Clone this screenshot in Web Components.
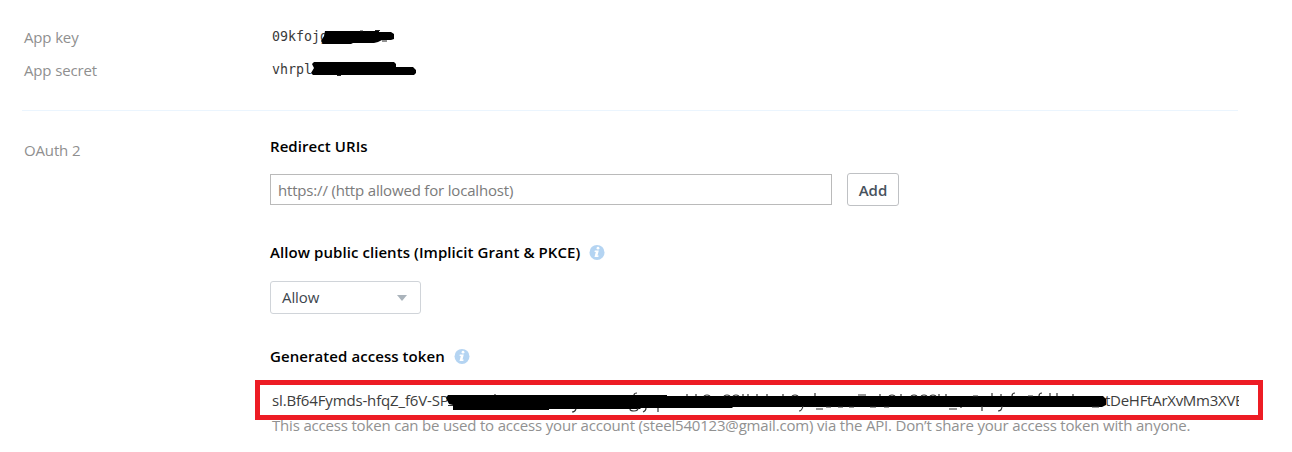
<!DOCTYPE html>
<html lang="en">
<head>
<meta charset="utf-8">
<title>App settings</title>
<style>
body{margin:0;background:#fff;width:1292px;height:452px;overflow:hidden;font:15px/20px "Open Sans","Noto Sans",sans-serif;color:#000}
</style>
</head>
<body>
<app-settings></app-settings>
<script>
function define(name, html){
  const t=document.createElement('template');
  t.innerHTML=html;
  customElements.define(name,class extends HTMLElement{
    constructor(){super();this.attachShadow({mode:'open'}).appendChild(t.content.cloneNode(true));}
  });
}

define('setting-row',`<style>
:host{display:grid;grid-template-columns:246px 1fr}
.label{color:#8f8f8f;letter-spacing:-.15px}
.value{min-width:0}
</style><div class="label"><slot name="label"></slot></div><div class="value"><slot></slot></div>`);

define('key-value',`<style>
:host{display:block;position:relative;height:20px;padding-left:2px;font:13.3px/20px "DejaVu Sans Mono",monospace;color:#3a3a3a}
::slotted(svg){position:absolute;left:0;top:0;overflow:visible}
</style><slot></slot>`);

define('info-icon',`<style>:host{display:block;width:16px;height:16px}svg{display:block}</style>
<svg width="16" height="16" viewBox="0 0 16 16"><circle cx="8" cy="8.4" r="7.5" fill="#b4d4f2"/>
<circle cx="9" cy="4.2" r="1.4" fill="#fff"/><path d="M5.8 6.5h4L8.5 11.5h1.2l-.4 1.5H5.5L6.8 7.9H5.5z" fill="#fff"/></svg>`);

define('section-title',`<style>
:host{display:flex;align-items:center;gap:9px;height:20px;font-weight:600}
.t{letter-spacing:.07px}
</style><span class="t"><slot></slot></span><slot name="icon"></slot>`);

define('uri-field',`<style>
:host{display:flex;align-items:center;gap:15px;height:33px}
.input{box-sizing:border-box;width:562px;height:31px;border:1px solid #bababa;padding:0 7px;line-height:31px;color:#7b7b7b;letter-spacing:-.18px}
.button{box-sizing:border-box;width:52px;height:33px;border:1px solid #bfc1c4;border-radius:3px;text-align:center;line-height:33px;font-weight:600;color:#47525d}
</style><div class="input"><slot></slot></div><div class="button"><slot name="action"></slot></div>`);

define('select-box',`<style>
:host{box-sizing:border-box;display:flex;justify-content:space-between;align-items:center;width:151px;height:33px;border:1px solid #d0d4d9;border-radius:3px;padding:0 13px 0 11px;color:#3d464d}
span{letter-spacing:-.1px;padding-bottom:2px}
</style><span><slot></slot></span><svg width="10" height="6"><path d="M0 0h10L5 6z" fill="#aab3bb"/></svg>`);

define('access-token',`<style>
:host{display:block;position:relative;width:969px;height:40px}
.line{display:flex;overflow:hidden;height:40px;line-height:41px;padding-left:2px;color:#3d3d3d;white-space:nowrap}
.head{width:833px;flex:none;letter-spacing:-.15px}
.tail{letter-spacing:-.27px}
.frame{position:absolute;box-sizing:border-box;left:-15px;top:0;width:1008px;height:40px;border:5px solid #ed1c24}
::slotted(svg){position:absolute;left:0;top:0;overflow:visible}
</style><div class="line"><span class="head"><slot name="head"></slot></span><span class="tail"><slot name="tail"></slot></span></div>
<slot name="cover"></slot><div class="frame"></div>`);

define('app-settings',`<style>
:host{display:block;box-sizing:border-box;padding:27px 0 0 24px;width:1292px;height:452px}
.keys{display:grid;gap:13px}
hr{border:0;height:1px;background:#ebf5fe;margin:30px 54px 0 -2px}
.oauth{margin-top:29px}
.stack{margin-top:-4px}
uri-field{margin-top:17px}
.public{margin-top:36px}
select-box{margin-top:19px}
.generated{margin-top:32px}
access-token{margin-top:14px;z-index:1}
.note{margin-top:-5px;padding-left:2px;color:#919191;white-space:nowrap;letter-spacing:-.18px}
</style>
<div class="keys">
<setting-row><span slot="label">App key</span><key-value>09kfojg<svg width="140" height="20"><path d="M55 4h54v1h12l3 2v5l-3 1h-9l-4 2-4 1H83l-2 1H53l-2-3 3-5z" fill="#000"/><path d="M90 4h3M105 3.5h5M112 14h5" stroke="#222"/></svg></key-value></setting-row>
<setting-row><span slot="label">App secret</span><key-value>vhrpl<svg width="150" height="20"><path d="M44 2h80l2 2v3h17l3 3v3l-2 2H43l-2-2 3-5-2-4z" fill="#000"/><path d="M67 15.5h4" stroke="#222"/></svg></key-value></setting-row>
</div>
<hr>
<setting-row class="oauth"><span slot="label">OAuth 2</span>
<div class="stack">
<section-title>Redirect URIs</section-title>
<uri-field>https:// (http allowed for localhost)<span slot="action">Add</span></uri-field>
<section-title class="public">Allow public clients (Implicit Grant &amp; PKCE)<info-icon slot="icon"></info-icon></section-title>
<select-box>Allow</select-box>
<section-title class="generated">Generated access token<info-icon slot="icon"></info-icon></section-title>
<access-token><span slot="head">sl.Bf64Fymds-hfqZ_f6V-SP</span><span slot="tail">tDeHFtArXvMm3XVE</span>
<svg slot="cover" width="969" height="40"><path d="M178 15h219v1h436l3 3v6l-4 2H463l-1 1H371l-1 1H279v1H183v-5l-4-1-3-6z" fill="#000"/>
<g stroke="#333" stroke-width="1.2" fill="none"><path d="M178 25.5h5M225 15v-1M306 29q-1 3-4 3M368 28q0 3-4 3t-4-2M376 28q0 3-3 4M388 28v4M364 15q0-2 3-2M417 16v-2M426 16v-2M434 16q3-2 6 0M454 16q3-2 6 0M463 16q3-2 6 0M473 16v-2M478 16v-2M487 16v-2M497 16v-2M513 16v-2M522 16q3-2 6 0M533 26q-1 5-4 5M545 16v-3M546 29h7M556 27h5M568 27h5M579 27h5M588 15h8M600 27h6M610 16v-2M614 27h5M619 16q3-2 6 0M631 16v-2M641 16q3-2 6 0M651 16q3-2 6 0M660 16q3-2 6 0M669 16v-2M676 16v-2M679 29h8M691 27v1M703 16h5M712 26v5M722 16v-3M731 16v-2M732 26q0 5-4 5M742 16q0-3 3-3M758 16h5M769 16q0-3 3-3M780 16v-3M787 16v-3M803 16v-2M822 27h7"/></g></svg>
</access-token>
<div class="note">This access token can be used to access your account (steel540123@gmail.com) via the API. Don’t share your access token with anyone.</div>
</div>
</setting-row>`);
</script>
</body>
</html>
